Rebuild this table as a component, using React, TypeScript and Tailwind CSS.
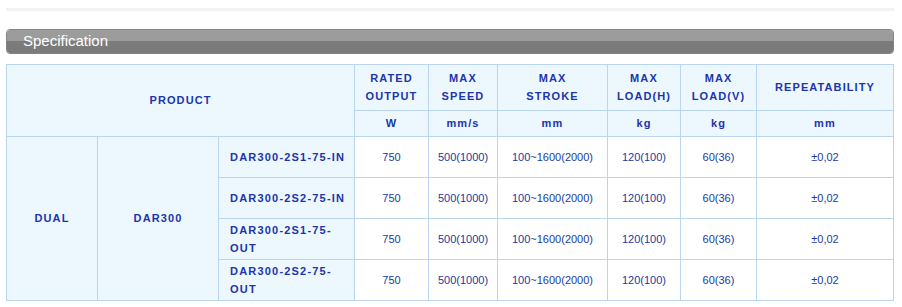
const HEAD = "bg-[#edf8fe] text-[#2034aa] font-bold tracking-[1.1px] text-[11px] flex items-center justify-center text-center leading-[18px] pb-px";
const BODY = "bg-white text-[#1a3a9e] text-[11px] flex items-center justify-center leading-[18px] pb-px";

const columns = [
  { top: ["RATED", "OUTPUT"], unit: "W" },
  { top: ["MAX", "SPEED"], unit: "mm/s" },
  { top: ["MAX", "STROKE"], unit: "mm" },
  { top: ["MAX", "LOAD(H)"], unit: "kg" },
  { top: ["MAX", "LOAD(V)"], unit: "kg" },
  { top: ["REPEATABILITY"], unit: "mm" },
];

const models: [string, string?][] = [
  ["DAR300-2S1-75-IN"],
  ["DAR300-2S2-75-IN"],
  ["DAR300-2S1-75-", "OUT"],
  ["DAR300-2S2-75-", "OUT"],
];

const values = ["750", "500(1000)", "100~1600(2000)", "120(100)", "60(36)", "±0,02"];

export default function App() {
  return (
    <div className="bg-white w-[902px] h-[307px] pt-[8px] pl-[6px] font-['Liberation_Sans',Arial,sans-serif]">
      <div className="w-[888px] h-[3px] bg-[#f2f2f2]" />

      <div className="mt-[18px] w-[888px] h-[25px] rounded-[4px] border border-[#858585] overflow-hidden relative flex flex-col">
        <div className="h-[11px] bg-[#9c9c9c]" />
        <div className="flex-1 bg-[#7b7b7b]" />
        <span className="absolute left-[16px] top-[2px] text-white text-[15px] leading-[17px]">Specification</span>
      </div>

      <div
        className="mt-[10px] grid gap-px bg-[#bad6ee] border border-[#bad6ee] w-[888px]"
        style={{
          gridTemplateColumns: "90px 120px 135px 73px 68px 109px 72px 75px 136px",
          gridTemplateRows: "45px 25px 40px 40px 40px 40px",
        }}
      >
        <div className={`${HEAD} col-span-3 row-span-2`}>PRODUCT</div>
        {columns.map((c) => (
          <div key={c.top.join()} className={HEAD}>
            <div>
              {c.top.map((t) => (
                <div key={t}>{t}</div>
              ))}
            </div>
          </div>
        ))}
        {columns.map((c, i) => (
          <div key={i} className={HEAD}>{c.unit}</div>
        ))}

        <div className={HEAD} style={{ gridColumn: 1, gridRow: "3 / span 4" }}>DUAL</div>
        <div className={HEAD} style={{ gridColumn: 2, gridRow: "3 / span 4" }}>DAR300</div>
        {models.map(([a, b], r) => (
          <div key={a + r} className="contents">
            <div
              className="bg-[#edf8fe] text-[#2034aa] font-bold tracking-[1.2px] text-[11px] leading-[18px] flex items-center pl-[11px] pb-px"
              style={{ gridColumn: 3, gridRow: r + 3 }}
            >
              <div>
                <div>{a}</div>
                {b && <div>{b}</div>}
              </div>
            </div>
            {values.map((v, i) => (
              <div key={i} className={BODY} style={{ gridColumn: i + 4, gridRow: r + 3 }}>
                {v}
              </div>
            ))}
          </div>
        ))}
      </div>
    </div>
  );
}
